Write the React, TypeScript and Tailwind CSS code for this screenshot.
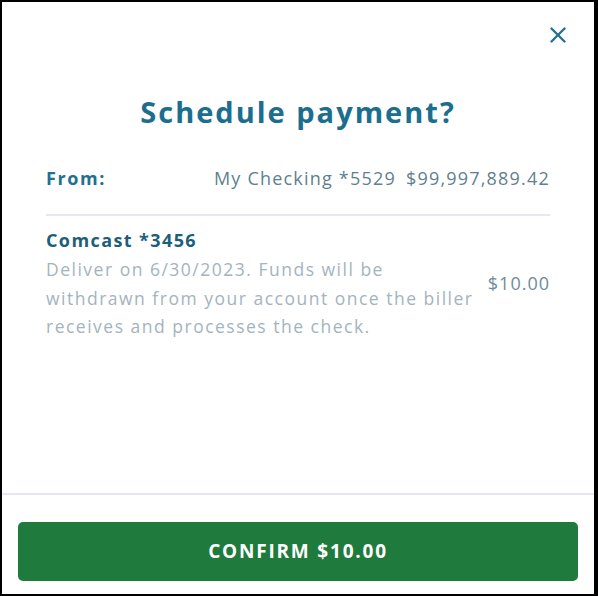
import { X } from "lucide-react";

const App = () => {
  return (
    <div
      className="w-[598px] h-[596px] bg-white border-black border-l-2 border-t-2 border-r-4 border-b-2 flex flex-col"
      style={{ fontFamily: '"Open Sans", "Liberation Sans", sans-serif' }}
    >
      {/* Close */}
      <div className="flex justify-end pt-[20px] pr-[23px]">
        <X className="w-[26px] h-[26px] text-[#23708f]" strokeWidth={2.2} />
      </div>

      {/* Title */}
      <h1 className="text-center text-[29px] font-bold text-[#1c6e8e] mt-[46px] leading-[36px] tracking-[2px]">
        Schedule payment?
      </h1>

      {/* Body */}
      <div className="px-[44px] mt-[36px]">
        <div className="flex items-center justify-between text-[18px] leading-[24px] pb-[24px] border-b-2 border-[#e6e8f0]">
          <span className="font-bold text-[#23708f] tracking-[1.6px]">From:</span>
          <div className="flex gap-[10px] text-[#5f7f8f] tracking-[1.2px]">
            <span>My Checking *5529</span>
            <span>$99,997,889.42</span>
          </div>
        </div>

        <div className="pt-[11px] flex items-center justify-between">
          <div>
            <div className="text-[18px] font-bold leading-[26px] mb-[2px] text-[#1d5f7a] tracking-[1.4px]">
              Comcast *3456
            </div>
            <p className="text-[17.5px] leading-[28.5px] text-[#a3b4be] tracking-[1.5px] whitespace-nowrap">
              Deliver on 6/30/2023. Funds will be
              <br />
              withdrawn from your account once the biller
              <br />
              receives and processes the check.
            </p>
          </div>
          <span className="text-[18px] text-[#6f8c9a] tracking-[1px]">$10.00</span>
        </div>
      </div>

      <div className="grow" />

      {/* Footer */}
      <div className="border-t-2 border-[#e6e8f0] px-[16px] pt-[27px] pb-[13px]">
        <button className="w-full h-[59px] rounded-[5px] bg-[#1f7a3d] text-white text-[19px] font-bold tracking-[1.8px]">
          CONFIRM $10.00
        </button>
      </div>
    </div>
  );
};

export default App;
